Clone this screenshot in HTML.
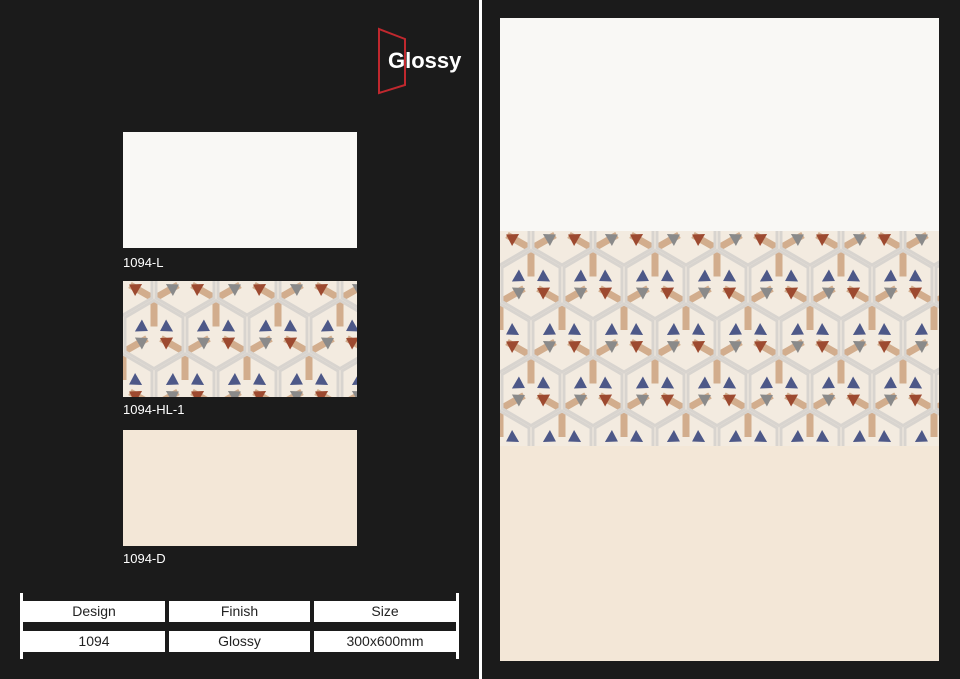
<!DOCTYPE html>
<html><head><style>
body{margin:0;width:960px;height:679px;background:#1b1b1b;position:relative;overflow:hidden;font-family:"Liberation Sans",sans-serif}
.a{position:absolute}
.lbl{color:#fff;font-size:13px}
.cell{position:absolute;background:#fff;color:#222;font-size:14px;text-align:center;line-height:21px}
</style></head><body>
<svg width="0" height="0" class="a">
<defs>
<g id="st">
<g stroke="#d2ad8d" stroke-width="7">
<line x1="0" y1="-8" x2="0" y2="-32"/><line x1="7" y1="4" x2="28" y2="16"/><line x1="-7" y1="4" x2="-28" y2="16"/>
</g>
<g stroke="#d8d4cf" stroke-width="3" fill="none"><polygon points="0,-34 29,-17 29,17 0,34 -29,17 -29,-17"/></g>
<polygon points="0,-7 -7,-18 7,-18" fill="#4d5888" transform="rotate(60)"/>
<polygon points="0,-7 -7,-18 7,-18" fill="#9d4a30" transform="rotate(120)"/>
<polygon points="0,-7 -7,-18 7,-18" fill="#8a8a8a" transform="rotate(240)"/>
<polygon points="0,-7 -7,-18 7,-18" fill="#4d5888" transform="rotate(300)"/>
</g>
<pattern id="p" width="62" height="107" patternUnits="userSpaceOnUse">
<rect width="62" height="107" fill="#f3ebe0"/>
<use href="#st" x="0" y="0"/><use href="#st" x="62" y="0"/><use href="#st" x="0" y="107"/><use href="#st" x="62" y="107"/><use href="#st" x="31" y="53.5"/>
</pattern>
</defs></svg>

<svg class="a" style="left:375px;top:27px" width="35" height="68"><polygon points="4,2 30,12 30,58 4,66" fill="none" stroke="#c0282e" stroke-width="2"/></svg>
<div class="a" style="left:388px;top:48px;color:#fff;font-size:22px;font-weight:bold">Glossy</div>

<div class="a" style="left:123px;top:132px;width:234px;height:116px;background:#f9f8f5"></div>
<div class="a lbl" style="left:123px;top:255px">1094-L</div>
<svg class="a" style="left:123px;top:281px" width="234" height="116"><rect width="234" height="116" fill="url(#p)"/></svg>
<div class="a lbl" style="left:123px;top:402px">1094-HL-1</div>
<div class="a" style="left:123px;top:430px;width:234px;height:116px;background:#f3e7d7"></div>
<div class="a lbl" style="left:123px;top:551px">1094-D</div>

<div class="a" style="left:20px;top:593px;width:3px;height:66px;background:#fff"></div>
<div class="a" style="left:456px;top:593px;width:3px;height:66px;background:#fff"></div>
<div class="cell" style="left:23px;top:601px;width:142px">Design</div>
<div class="cell" style="left:169px;top:601px;width:141px">Finish</div>
<div class="cell" style="left:314px;top:601px;width:142px">Size</div>
<div class="cell" style="left:23px;top:631px;width:142px">1094</div>
<div class="cell" style="left:169px;top:631px;width:141px">Glossy</div>
<div class="cell" style="left:314px;top:631px;width:142px">300x600mm</div>

<div class="a" style="left:479px;top:0;width:3px;height:679px;background:#fff"></div>

<div class="a" style="left:500px;top:18px;width:439px;height:213px;background:#f9f8f5"></div>
<svg class="a" style="left:500px;top:231px" width="439" height="215"><rect width="439" height="215" fill="url(#p)"/></svg>
<div class="a" style="left:500px;top:446px;width:439px;height:215px;background:#f3e7d7"></div>
</body></html>
